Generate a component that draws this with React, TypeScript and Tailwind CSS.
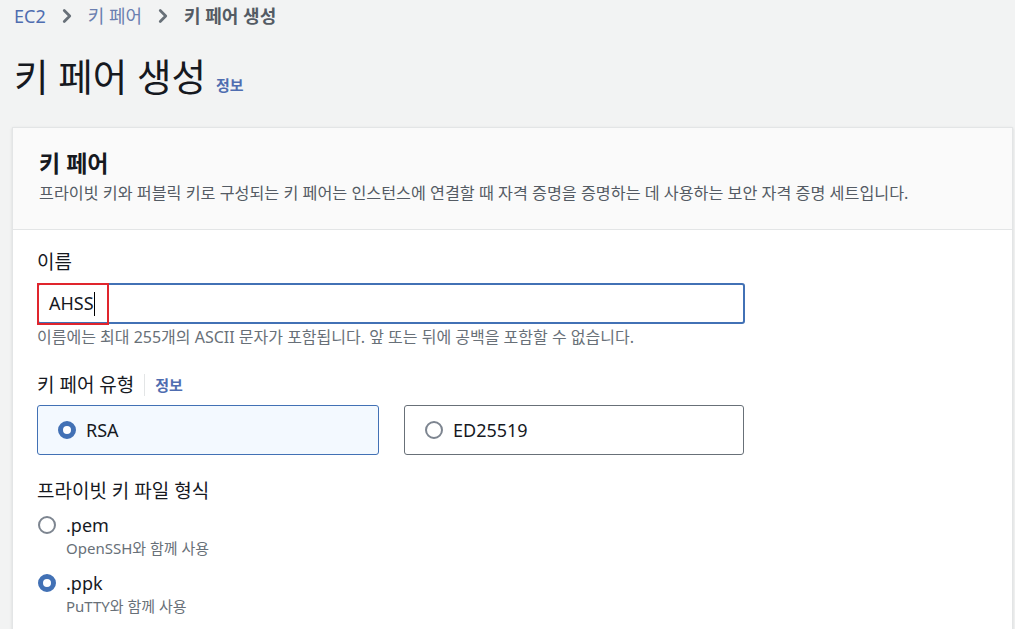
import { ChevronRight } from "lucide-react";

const FONT = "font-['Noto_Sans','Noto_Sans_CJK_KR',sans-serif]";

function Radio({ checked }: { checked: boolean }) {
  return checked ? (
    <span className="block w-[18px] h-[18px] rounded-full border-[5px] border-[#4271b5] bg-white shrink-0" />
  ) : (
    <span className="block w-[18px] h-[18px] rounded-full border-2 border-[#7d8590] bg-white shrink-0" />
  );
}

export default function App() {
  return (
    <div className={`${FONT} w-[1015px] h-[629px] overflow-hidden bg-[#f2f3f3] text-[#16191f]`}>
      {/* Breadcrumb */}
      <div className="flex items-center gap-[10px] pl-[14px] h-[32px] text-[18px]">
        <span className="text-[#4f6db0]">EC2</span>
        <ChevronRight className="w-[22px] h-[22px] text-[#687078]" strokeWidth={3} />
        <span className="text-[#6b7fb0]">키 페어</span>
        <ChevronRight className="w-[22px] h-[22px] text-[#687078]" strokeWidth={3} />
        <span className="text-[#545b64] font-bold">키 페어 생성</span>
      </div>

      {/* Title */}
      <div className="flex items-baseline gap-[10px] pl-[14px] pt-[21px] h-[95px]">
        <h1 className="text-[37.5px] leading-[48px] font-normal">키 페어 생성</h1>
        <span className="text-[15px] text-[#4f6db0] font-semibold">정보</span>
      </div>

      {/* Card */}
      <div className="ml-[12px] mr-[2px] bg-white border border-[#e3e5e6] shadow-sm">
        <div className="bg-[#fafafa] border-b border-[#e3e5e6] pl-[26px] pt-[19px] h-[102px]">
          <h2 className="text-[23px] font-bold leading-[32px]">키 페어</h2>
          <p className="text-[16.2px] text-[#545b64] leading-[20px] mt-[4px]">
            프라이빗 키와 퍼블릭 키로 구성되는 키 페어는 인스턴스에 연결할 때 자격 증명을 증명하는 데 사용하는 보안 자격 증명 세트입니다.
          </p>
        </div>

        <div className="pl-[24px] pt-[20px] pb-[20px]">
          <label className="block text-[19px] leading-[24px]">이름</label>
          <div className="mt-[9px] w-[708px] h-[41px] border-2 border-[#4271b5] rounded-[3px] flex items-center relative">
            <span className="text-[18px] pl-[10px]">AHSS</span>
            <span className="w-px h-[24px] bg-black" />
            <span className="absolute -left-[2px] -top-[2px] w-[72px] h-[42px] border-2 border-[#e0252d]" />
          </div>
          <p className="text-[16px] text-[#687078] mt-[4px] leading-[18px]">
            이름에는 최대 255개의 ASCII 문자가 포함됩니다. 앞 또는 뒤에 공백을 포함할 수 없습니다.
          </p>

          <div className="flex items-center mt-[27px] h-[24px]">
            <span className="text-[19px]">키 페어 유형</span>
            <span className="w-px h-[22px] bg-[#e3e5e6] mx-[10px]" />
            <span className="text-[15px] text-[#4f6db0] font-semibold">정보</span>
          </div>
          <div className="flex gap-[25px] mt-[8px]">
            <div className="w-[342px] h-[50px] rounded-[3px] border border-[#4271b5] bg-[#f3f9ff] flex items-center gap-[10px] pl-[20px]">
              <Radio checked />
              <span className="text-[18px]">RSA</span>
            </div>
            <div className="w-[340px] h-[50px] rounded-[3px] border border-[#687078] bg-white flex items-center gap-[10px] pl-[20px]">
              <Radio checked={false} />
              <span className="text-[18px]">ED25519</span>
            </div>
          </div>

          <div className="text-[19px] mt-[23px] leading-[26px]">프라이빗 키 파일 형식</div>
          <div className="mt-[9px] flex flex-col gap-[12px]">
            <div className="flex gap-[10px] pl-px">
              <div className="pt-[3px]"><Radio checked={false} /></div>
              <div>
                <div className="text-[18px] leading-[24px]">.pem</div>
                <div className="text-[15px] text-[#687078] leading-[22px]">OpenSSH와 함께 사용</div>
              </div>
            </div>
            <div className="flex gap-[10px] pl-px">
              <div className="pt-[3px]"><Radio checked /></div>
              <div>
                <div className="text-[18px] leading-[24px]">.ppk</div>
                <div className="text-[15px] text-[#687078] leading-[22px]">PuTTY와 함께 사용</div>
              </div>
            </div>
          </div>
        </div>
      </div>
    </div>
  );
}
